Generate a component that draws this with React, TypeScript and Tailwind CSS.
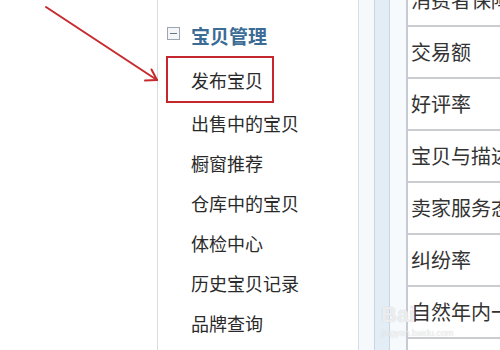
import React from "react";

const cjk = { fontFamily: '"Noto Sans CJK SC", "Noto Sans", sans-serif' };

const items = ["出售中的宝贝", "橱窗推荐", "仓库中的宝贝", "体检中心", "历史宝贝记录", "品牌查询"];
const rows = ["消费者保障", "交易额", "好评率", "宝贝与描述", "卖家服务态", "纠纷率", "自然年内一", ""];

export default function App() {
  return (
    <div className="relative flex h-[350px] w-[500px] overflow-hidden bg-white" style={cjk}>
      {/* left blank area */}
      <div className="w-[157px] shrink-0 bg-white" />

      {/* sidebar */}
      <div className="flex w-[202px] shrink-0 flex-col border-x border-[#d6dde4] bg-white pt-[15px]">
        <div className="flex h-[41px] items-center pl-[9px]">
          <div className="-mt-[5px] flex h-[13px] w-[13px] items-center justify-center border border-[#9aa6b2] bg-[#f4f6f8]">
            <div className="h-[1px] w-[7px] bg-[#6b7683]" />
          </div>
          <span className="ml-[11px] text-[19px] font-bold leading-none text-[#3b6c95]">宝贝管理</span>
        </div>
        <div className="ml-[8px] flex h-[47px] w-[108px] items-center border-2 border-[#c4282e] pl-[23px]">
          <span className="text-[18px] leading-none text-[#2a2a2a]">发布宝贝</span>
        </div>
        {items.map((t) => (
          <div key={t} className="flex h-[40px] items-center pl-[33px]">
            <span className="text-[18px] leading-none text-[#2a2a2a]">{t}</span>
          </div>
        ))}
      </div>

      {/* bluish divider band */}
      <div className="w-[15px] shrink-0 bg-[#f5f9fc]" />
      <div className="w-[16px] shrink-0 border-x border-[#c8d6e2] bg-[#e2edf5]" />
      <div className="w-[16px] shrink-0 bg-[#f7fafc]" />

      {/* table */}
      <div className="flex flex-1 flex-col border-l-2 border-[#c4cbd2] bg-white -mt-[25px]">
        {rows.map((r, i) => (
          <div key={i} className="flex h-[52px] shrink-0 items-center border-b-2 border-[#c9cdd2] pl-[3px]">
            <span className="whitespace-nowrap text-[20px] leading-none text-[#333]">{r}</span>
          </div>
        ))}
      </div>

      {/* red arrow annotation */}
      <svg className="absolute left-0 top-0" width="200" height="120" viewBox="0 0 200 120">
        <g stroke="#c62a2d" strokeWidth="2" strokeLinecap="round" fill="none">
          <line x1="46" y1="7" x2="157" y2="80" />
          <line x1="157" y1="80" x2="145" y2="80.5" />
          <line x1="157" y1="80" x2="151.5" y2="69.5" />
        </g>
      </svg>

      {/* watermark */}
      <div className="pointer-events-none absolute left-[381px] top-[304px] flex flex-col">
        <span className="text-[22px] font-bold leading-none text-white/70 [text-shadow:0_0_1px_#bfc4c8]" style={{ fontFamily: '"Liberation Sans", sans-serif' }}>
          Bai
        </span>
        <span className="mt-[3px] text-[9px] leading-none text-white/70 [text-shadow:0_0_1px_#c5c9cc]" style={{ fontFamily: '"Liberation Sans", sans-serif' }}>
          jingyan.baidu.com
        </span>
      </div>
    </div>
  );
}
